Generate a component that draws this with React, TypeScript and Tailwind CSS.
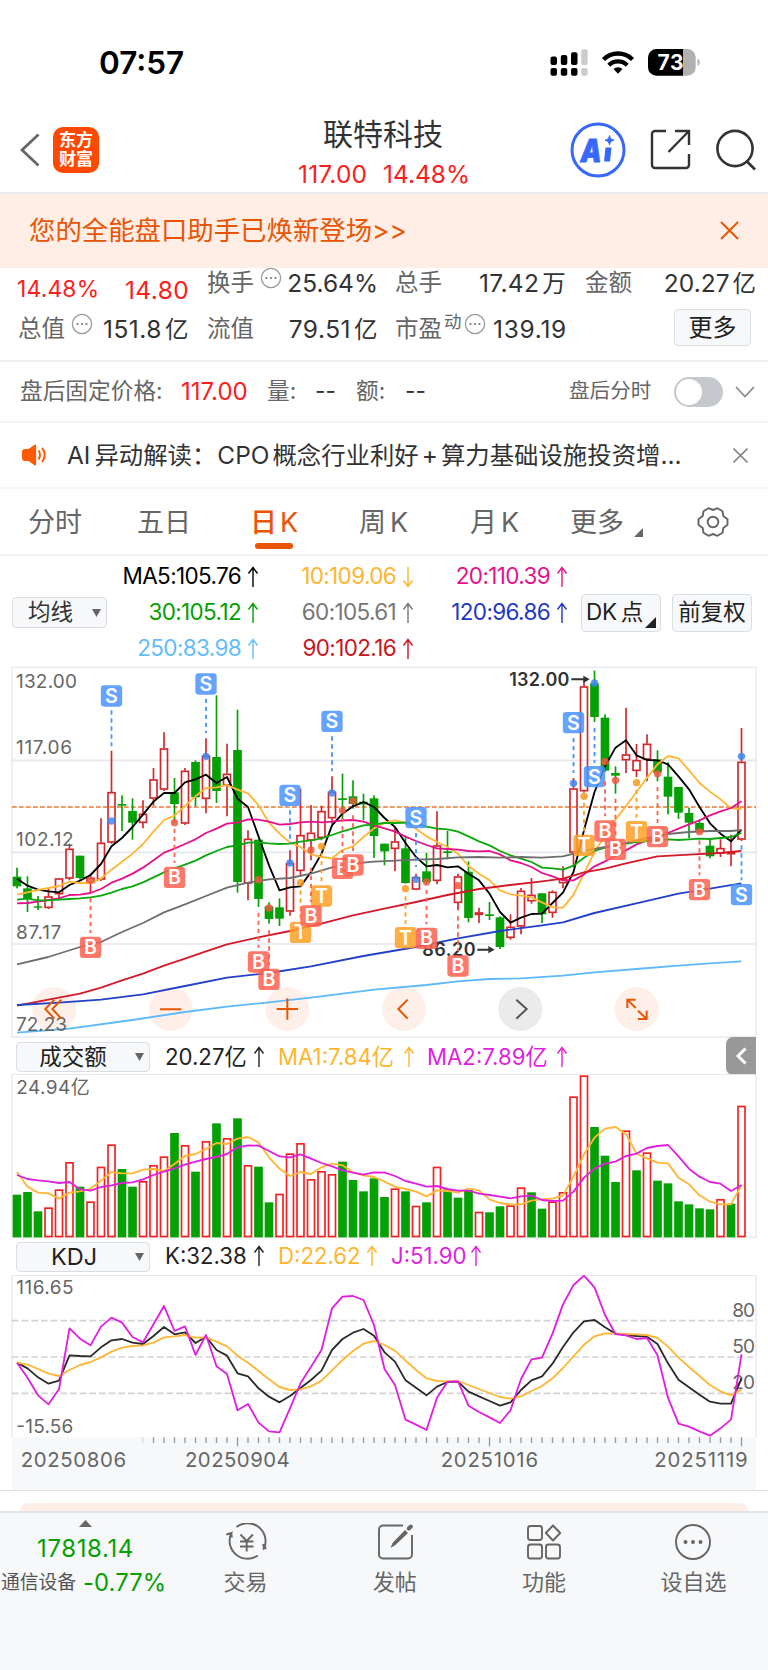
import type { ReactNode } from 'react';

type Candle = ['r' | 'g', number, number, number, number];

// chart drawings use a 3x coordinate space, one candle every 31.5 units
const STEP = 31.5;
const START = 51;
const xAt = (i: number) => START + i * STEP;
const toLine = (ys: number[]) => ys.map((y, i) => `${xAt(i)},${y}`).join(' ');

const GREEN = '#04a004';
const RED = '#d2282d';

// color, high, body top, body bottom, low
const candles: Candle[] = [
    ['g', 622, 649, 678, 684], ['g', 648, 684, 716, 755], ['g', 707, 738, 742, 749], ['r', 683, 708, 743, 746],
    ['r', 654, 654, 702, 716], ['r', 550, 565, 655, 660], ['g', 586, 586, 653, 657], ['r', 640, 652, 668, 697],
    ['r', 474, 547, 658, 662], ['r', 271, 395, 547, 550], ['g', 405, 431, 436, 512], ['g', 414, 452, 487, 538],
    ['r', 420, 460, 488, 504], ['r', 323, 357, 415, 436], ['r', 216, 264, 388, 392], ['g', 353, 396, 431, 487],
    ['r', 323, 331, 490, 494], ['g', 300, 305, 411, 438], ['r', 234, 286, 416, 459], ['g', 105, 290, 392, 428],
    ['r', 250, 340, 376, 468], ['g', 148, 269, 665, 697], ['r', 510, 535, 670, 720], ['g', 538, 538, 716, 740],
    ['g', 726, 738, 776, 790], ['g', 714, 741, 775, 797], ['r', 570, 608, 754, 766], ['r', 385, 524, 632, 645],
    ['r', 434, 517, 541, 600], ['r', 436, 452, 533, 540], ['r', 348, 394, 474, 490], ['g', 340, 414, 419, 480],
    ['g', 360, 408, 431, 445], ['g', 400, 424, 432, 480], ['g', 405, 414, 527, 593], ['g', 550, 550, 573, 615],
    ['r', 500, 543, 566, 633], ['g', 528, 564, 668, 670], ['r', 640, 650, 688, 690], ['g', 578, 633, 665, 670],
    ['r', 453, 555, 662, 672], ['g', 512, 573, 578, 597], ['r', 640, 648, 728, 750], ['g', 603, 634, 773, 786],
    ['r', 742, 756, 764, 788], ['g', 725, 762, 767, 779], ['g', 768, 771, 860, 866], ['r', 762, 799, 833, 838],
    ['r', 683, 691, 799, 822], ['r', 653, 703, 723, 730], ['g', 699, 699, 762, 788], ['r', 690, 694, 758, 772],
    ['r', 618, 654, 669, 684], ['r', 353, 384, 577, 620], ['r', 60, 78, 393, 397], ['g', 31, 69, 170, 185],
    ['g', 162, 172, 331, 335], ['g', 318, 338, 346, 400], ['r', 142, 282, 300, 338], ['r', 251, 299, 332, 351],
    ['r', 222, 250, 298, 363], ['g', 270, 297, 337, 363], ['g', 306, 349, 409, 462], ['g', 380, 380, 457, 476],
    ['g', 442, 458, 487, 534], ['g', 478, 488, 514, 516], ['g', 536, 556, 588, 594], ['r', 537, 563, 580, 590],
    ['r', 523, 575, 582, 618], ['r', 203, 304, 538, 542],
];

const ma5 = [
    655, 676, 688, 693, 696, 674, 661, 644, 611, 558, 533, 500, 463, 424, 398, 398, 366, 357, 343, 368, 350, 415, 440, 528,
    615, 690, 681, 678, 635, 580, 495, 460, 438, 425, 440, 473, 500, 548, 590, 618, 614, 621, 618, 640, 660, 700, 755, 787,
    772, 761, 760, 728, 697, 635, 510, 395, 318, 262, 240, 285, 299, 300, 312, 348, 387, 440, 489, 520, 543, 508,
];
const ma10 = [
    703, 696, 689, 683, 677, 664, 668, 668, 655, 628, 604, 580, 551, 514, 479, 466, 437, 408, 383, 381, 374, 388, 399, 435,
    487, 520, 547, 560, 582, 590, 594, 569, 558, 530, 504, 487, 480, 487, 505, 528, 545, 560, 580, 617, 640, 660, 690, 702,
    706, 711, 726, 741, 742, 703, 640, 575, 526, 477, 437, 395, 352, 312, 287, 294, 330, 368, 394, 417, 444, 446,
];
const ma20 = [
    729, 728, 724, 719, 714, 704, 703, 698, 686, 667, 655, 640, 622, 600, 577, 565, 551, 537, 518, 505, 490, 487, 477, 478,
    484, 493, 491, 486, 484, 486, 484, 480, 479, 484, 495, 504, 514, 529, 542, 554, 564, 566, 568, 572, 573, 572, 582, 600,
    608, 620, 638, 648, 660, 660, 642, 618, 603, 587, 570, 552, 540, 526, 518, 505, 492, 480, 465, 453, 443, 423,
];
const ma30 = [
    718, 715, 720, 720, 718, 716, 714, 711, 706, 697, 686, 678, 666, 651, 636, 624, 613, 601, 585, 572, 560, 555, 547, 546,
    549, 551, 550, 544, 540, 534, 524, 513, 504, 495, 492, 488, 488, 487, 490, 499, 505, 507, 514, 528, 543, 555, 572, 585,
    595, 605, 622, 624, 628, 616, 592, 572, 562, 555, 550, 545, 542, 539, 537, 539, 537, 535, 536, 533, 530, 518,
];
const ma60 = '51,912 145,890 240,860 303,845 366,815 429,788 492,756 555,732 618,707 681,682 744,667 807,657 870,653 933,640 996,621 1059,610 1122,604 1185,601 1248,598 1311,596 1374,591 1437,590 1500,592 1563,590 1626,592 1689,588 1752,572 1815,560 1878,548 1941,533 2004,521 2067,515 2130,512 2193,512 2224,509';
const ma90 = '51,1036 145,1018 240,1000 303,982 366,960 429,940 492,916 555,895 618,873 681,852 775,831 870,812 964,790 1059,765 1153,745 1248,725 1342,704 1437,686 1531,674 1626,663 1689,655 1752,636 1815,625 1878,609 1972,588 2067,583 2161,578 2224,572';
const ma120 = '51,1034 177,1027 303,1018 429,1002 555,977 681,952 807,938 933,918 1090,887 1248,860 1374,834 1500,812 1626,795 1689,786 1783,758 1909,729 2035,700 2130,685 2224,669';
const ma250 = '51,1117 208,1105 397,1079 555,1055 681,1039 807,1026 964,1008 1122,988 1279,974 1374,963 1468,956 1563,954 1689,946 1783,936 1909,926 2035,916 2130,909 2224,903';

// letter, candle index, badge y, dash from, dash to, dot y
const marks: [string, number, number, number, number, number][] = [
    ['S', 9, 107, 150, 258, 482], ['S', 18, 71, 115, 218, 288], ['S', 26, 405, 450, 550, 608], ['S', 30, 183, 228, 333, 398],
    ['S', 38, 472, 518, 620, 657], ['S', 53, 187, 233, 338, 369], ['S', 55, 349, 203, 308, 68], ['S', 69, 703, 555, 660, 288],
    ['T', 27, 816, 690, 775, 667], ['T', 29, 707, 578, 663, 558], ['T', 37, 832, 708, 790, 685], ['T', 54, 555, 428, 515, 408],
    ['T', 59, 514, 388, 472, 367],
    ['B', 7, 861, 713, 818, 660], ['B', 15, 651, 505, 608, 487], ['B', 23, 905, 757, 862, 658], ['B', 24, 957, 810, 915, 743],
    ['B', 28, 767, 622, 725, 569], ['B', 31, 624, 473, 578, 450], ['B', 32, 614, 465, 572, 422], ['B', 39, 834, 688, 792, 665],
    ['B', 42, 917, 768, 872, 676], ['B', 56, 512, 363, 468, 304], ['B', 57, 567, 415, 525, 360], ['B', 61, 529, 380, 488, 340],
    ['B', 65, 688, 540, 645, 514],
];
const markFill: Record<string, string> = { S: '#4a94ff', B: '#ff6250', T: '#ff9f26' };
const dotFill: Record<string, string> = { S: '#3f86f5', B: '#ee5840', T: '#f79a1e' };

const volumeColors = 'gggrrrgrrrggrrrgrgrgrgrgg' + 'rrrrrrgggggrgrgrgggrggrrggrrrrgggrgrggggggrgr';
const volumes = [
    494, 486, 544, 532, 478, 396, 470, 514, 410, 343, 417, 470, 453, 405, 379, 309, 345, 425, 333, 280, 324, 265, 405, 410,
    517, 491, 370, 339, 447, 423, 432, 395, 450, 484, 445, 501, 475, 484, 527, 517, 410, 478, 503, 480, 545, 547, 529, 526,
    472, 487, 536, 514, 486, 199, 136, 291, 377, 456, 301, 421, 367, 452, 460, 514, 523, 535, 538, 507, 521, 227,
];
const volMa1 = [
    426, 470, 488, 490, 506, 488, 484, 476, 452, 426, 430, 430, 419, 417, 423, 402, 378, 372, 357, 339, 342, 326, 321, 337,
    382, 416, 438, 426, 432, 412, 401, 406, 427, 436, 441, 455, 470, 477, 485, 499, 481, 483, 487, 476, 481, 508, 519, 523,
    523, 512, 508, 506, 497, 440, 373, 323, 296, 291, 312, 371, 385, 398, 400, 443, 463, 496, 515, 523, 523, 466,
];
const volMa2 = [
    435, 447, 451, 454, 459, 456, 478, 482, 471, 466, 459, 457, 448, 435, 425, 415, 404, 395, 387, 381, 372, 352, 346, 347,
    363, 379, 382, 373, 386, 399, 409, 421, 428, 434, 427, 428, 438, 453, 461, 470, 468, 477, 482, 482, 491, 495, 500, 505,
    499, 497, 510, 513, 512, 485, 443, 416, 401, 395, 378, 371, 354, 348, 345, 379, 416, 440, 456, 461, 483, 465,
];

const kLine = [
    383, 400, 427, 446, 437, 361, 363, 364, 337, 316, 312, 323, 327, 303, 276, 298, 292, 324, 305, 345, 362, 415, 424, 460,
    485, 502, 483, 459, 435, 407, 345, 312, 293, 282, 302, 352, 380, 436, 458, 481, 455, 441, 440, 470, 484, 498, 512, 502,
    465, 436, 424, 386, 336, 292, 259, 255, 277, 296, 300, 303, 305, 327, 385, 434, 457, 479, 500, 506, 506, 430,
];
const dLine = [
    383, 389, 402, 416, 423, 405, 390, 381, 367, 350, 338, 333, 331, 323, 307, 304, 300, 308, 307, 320, 334, 362, 383, 408,
    433, 456, 465, 463, 454, 437, 406, 375, 348, 326, 318, 330, 347, 377, 405, 430, 438, 439, 438, 450, 462, 474, 486, 491,
    484, 468, 453, 430, 399, 364, 329, 304, 295, 296, 297, 298, 300, 309, 335, 368, 396, 423, 450, 469, 481, 463,
];
const jLine = [
    383, 428, 481, 508, 463, 280, 311, 331, 275, 248, 263, 306, 322, 268, 213, 288, 274, 360, 300, 394, 417, 526, 507, 563,
    589, 592, 520, 445, 395, 345, 220, 185, 183, 195, 270, 402, 450, 554, 569, 585, 488, 440, 439, 512, 531, 547, 564, 526,
    432, 373, 368, 296, 208, 150, 122, 157, 240, 297, 301, 312, 309, 361, 488, 566, 575, 589, 602, 580, 554, 358,
];

const Arrow = ({ down = false }: { down?: boolean }) => (
    <svg width="12" height="22" viewBox="0 0 12 22" fill="none" stroke="currentColor" strokeWidth="1.4" className={down ? 'rotate-180' : ''}>
        <path d="M6 21V2M1.5 7.5 6 1.5l4.500 6" />
    </svg>
);

const Dots = () => (
    <svg width="22" height="22" viewBox="0 0 22 22" className="relative -top-[5px] shrink-0">
        <circle cx="11" cy="11" r="9.600" fill="none" stroke="#999" strokeWidth="1.300" />
        <circle cx="6.500" cy="11" r="1.100" fill="#777" />
        <circle cx="11" cy="11" r="1.100" fill="#777" />
        <circle cx="15.500" cy="11" r="1.100" fill="#777" />
    </svg>
);

const StatusBar = () => (
    <div className="flex h-[111px] items-start">
        <div className="ml-[99px] mt-[46px] w-[451px] text-[31.5px] font-semibold leading-[34px] text-black">07:57</div>
        <svg width="152" height="30" viewBox="550 48 152 30" className="mt-[48px]">
            <g fill="#000">
                <rect x="550.5" y="56.500" width="6.500" height="8.500" rx="2" />
                <rect x="560.8" y="55" width="6.500" height="10" rx="2" />
                <rect x="571" y="52.300" width="6.500" height="12.700" rx="2" />
                <rect x="550.5" y="68" width="6.500" height="7.700" rx="2" />
                <rect x="560.8" y="68" width="6.500" height="7.700" rx="2" />
                <rect x="571" y="68" width="6.500" height="7.700" rx="2" />
            </g>
            <rect x="581.200" y="49.300" width="6.500" height="15.700" rx="2" fill="#ccc" />
            <rect x="581.200" y="68" width="6.500" height="7.700" rx="2" fill="#ccc" />
            <g fill="none" stroke="#000" strokeWidth="4.300">
                <path d="M603.500 59.500a20.500 20.500 0 0 1 29 0" />
                <path d="M608.800 65.200a13 13 0 0 1 18.400 0" />
            </g>
            <path d="M618 73.800l-4.500-4.700a6.400 6.400 0 0 1 9 0z" fill="#000" />
            <path d="M656.500 49H683v26.700h-26.500a8.500 8.500 0 0 1-8.500-8.500v-9.700a8.500 8.500 0 0 1 8.500-8.500z" fill="#000" />
            <path d="M683 49h4.200a8.500 8.500 0 0 1 8.500 8.500v9.700a8.500 8.500 0 0 1-8.500 8.500H683z" fill="#b0b0b0" />
            <path d="M697.500 58.800c3 1 3 6 0 7z" fill="#b0b0b0" />
            <text x="657.5" y="70" fontSize="21" fontWeight="700" fill="#fff" textLength="26">73</text>
        </svg>
    </div>
);

const Header = () => (
    <div className="flex h-[81px] items-center">
        <svg width="20" height="34" viewBox="0 0 20 34" fill="none" stroke="#666" strokeWidth="2.800" className="ml-5 mt-[-3px] shrink-0">
            <path d="M18.500 1.500 2 17l16.500 15.500" />
        </svg>
        <div className="ml-[13px] mt-[-4px] flex h-[46px] w-[46px] shrink-0 flex-col items-center justify-center rounded-[10px] bg-[#ff4800] text-[17px] font-semibold leading-[19px] text-white">
            <span>东方</span>
            <span>财富</span>
        </div>
        <div className="ml-[158px] flex w-[252px] shrink-0 flex-col items-center">
            <div className="mt-[5px] text-[30px] leading-[40px] text-[#333]">联特科技</div>
            <div className="flex w-full text-[24.500px] leading-[40px] text-[#fa2020]">
                <span className="ml-[41px] w-[85px] tracking-[0.2px]">117.00</span>
                <span>14.48%</span>
            </div>
        </div>
        <svg width="56" height="58" viewBox="0 0 56 58" className="ml-[61px] mt-[-4px] shrink-0">
            <circle cx="28" cy="29" r="26" fill="none" stroke="#3568fb" strokeWidth="3" />
            <text x="10.500" y="40.500" fontSize="31" fontWeight="900" fontStyle="italic" fill="#3568fb" stroke="#3568fb" strokeWidth=".8" textLength="21" lengthAdjust="spacingAndGlyphs">A</text>
            <path d="M35.500 26.500h6l-1.500 14h-6z" fill="#3568fb" />
            <path d="M39.500 14.500c.6 3 1.500 4 4.500 4.700-3 .7-3.900 1.700-4.500 4.700-.6-3-1.500-4-4.500-4.700 3-.7 3.900-1.700 4.500-4.700z" fill="#3568fb" stroke="#3568fb" />
        </svg>
        <svg width="41" height="41" viewBox="0 0 41 41" fill="none" stroke="#333" strokeWidth="2.400" className="ml-[24px] mt-[-4px] shrink-0">
            <path d="M16 2H5a3 3 0 0 0-3 3v31a3 3 0 0 0 3 3h31a3 3 0 0 0 3-3V25M25 2h14v14M39 2 18.500 23" />
        </svg>
        <svg width="42" height="42" viewBox="0 0 42 42" fill="none" stroke="#333" strokeWidth="2.600" className="ml-[24px] mt-[-4px] shrink-0">
            <circle cx="20" cy="19.500" r="17.600" />
            <path d="m32 32.500 8 8" />
        </svg>
    </div>
);

const Banner = () => (
    <div className="flex h-[76px] items-center border-t-2 border-[#e9ebee] bg-[#feeee6] text-[#ea5504]">
        <span className="-mt-[2px] ml-[29px] w-[691px] text-[26.4px]">您的全能盘口助手已焕新登场&gt;&gt;</span>
        <svg width="19" height="19" viewBox="0 0 19 19" stroke="currentColor" strokeWidth="1.900" className="-mt-[2px]">
            <path d="m1 1 17 17M18 1 1 18" />
        </svg>
    </div>
);

const Num = ({ value, unit, w }: { value: string; unit?: string; w: string }) => (
    <span className={`shrink-0 whitespace-nowrap text-right text-[24.5px] text-[#333] ${w}`}>
        {value}
        {unit && <span className="ml-[3px] text-[23.500px]">{unit}</span>}
    </span>
);

const Quotes = () => (
    <div className="h-[94px] border-b-2 border-[#eceef0] text-[23.5px] leading-[30px] text-[#666]">
        <div className="flex h-[30px] items-center">
            <span className="ml-[17px] mt-[12px] w-[108px] text-[22.800px] tracking-[0.2px] text-[#fa2020]">14.48%</span>
            <span className="mt-[14px] w-[82px] text-[24.5px] tracking-[0.4px] text-[#fa2020]">14.80</span>
            <span className="w-[53px]">换手</span>
            <Dots />
            <Num value="25.64%" w="w-[96px]" />
            <span className="ml-[17px] w-[60px]">总手</span>
            <Num value="17.42" unit="万" w="w-[111px] tracking-[0.3px]" />
            <span className="ml-[19px] w-[59px]">金额</span>
            <Num value="20.27" unit="亿" w="w-[112px]" />
        </div>
        <div className="mt-[11px] flex h-[40px] items-center">
            <span className="ml-[18px] w-[53px]">总值</span>
            <Dots />
            <Num value="151.8" unit="亿" w="w-[96px] tracking-[0.5px]" />
            <span className="ml-[18px] w-[60px]">流值</span>
            <Num value="79.51" unit="亿" w="w-[111px] tracking-[0.5px]" />
            <span className="ml-[17px] w-[49px]">市盈</span>
            <span className="relative -top-[7px] w-[20px] text-[17.500px]">动</span>
            <Dots />
            <Num value="139.19" w="w-[81px] tracking-[0.7px]" />
            <button className="ml-[107px] h-[37px] w-[77px] rounded border border-[#dadee4] bg-[#f7f8fa] text-[24px] leading-[34px] text-[#222] -mt-[3px]">更多</button>
        </div>
    </div>
);

const AfterHours = () => (
    <div className="flex h-[61px] items-center border-b-2 border-[#f4f4f5] text-[22.700px] text-[#666]">
        <span className="ml-[20px] w-[161px]">盘后固定价格:</span>
        <span className="w-[86px] text-[24px] text-[#fa2020]">117.00</span>
        <span className="w-[48px]">量:</span>
        <span className="w-[41px] text-[#333]">--</span>
        <span className="w-[49px]">额:</span>
        <span className="w-[164px] text-[#333]">--</span>
        <span className="w-[105px] text-[20.600px]">盘后分时</span>
        <div className="flex h-[30px] w-[49px] items-center rounded-full bg-[#c5c8cd] px-[2px]">
            <div className="h-[26px] w-[26px] rounded-full bg-white" />
        </div>
        <svg width="20" height="12" viewBox="0 0 20 12" fill="none" stroke="#888" strokeWidth="1.700" className="ml-[12px]">
            <path d="m1 1 9 9.500L19 1" />
        </svg>
    </div>
);

const AiNews = () => (
    <div className="flex h-[66px] items-center border-b-2 border-[#f6f6f7] text-[24.4px] text-[#333]">
        <svg width="26" height="22" viewBox="0 0 26 22" className="ml-[21px] shrink-0">
            <path d="M4 5h3.500L13.500.8c.8-.5 1.600-.1 1.600.8v18.800c0 .9-.8 1.300-1.600.8L7.500 17H4a3 3 0 0 1-3-3V8a3 3 0 0 1 3-3z" fill="#ff5a00" />
            <path d="M17.500 6.500c2 2.500 2 6.500 0 9M21 4c3.600 4 3.600 10 0 14" fill="none" stroke="#ff5a00" strokeWidth="2" />
        </svg>
        <span className="ml-[20px] w-[666px] whitespace-nowrap">
            AI<span className="ml-1">异动解读：</span>
            <span className="ml-[1px]">CPO</span>
            <span className="ml-[3px]">概念行业利好</span>
            <span className="mx-[3px]">+</span>
            <span>算力基础设施投资增...</span>
        </span>
        <svg width="15" height="15" viewBox="0 0 15 15" stroke="#888" strokeWidth="1.600" className="shrink-0">
            <path d="m.5.5 14 14M14.500.5l-14 14" />
        </svg>
    </div>
);

const Tabs = () => (
    <div className="flex h-[67px] items-center border-b-2 border-[#f4f4f5] pt-[2px] text-[27px] text-[#666]">
        <span className="ml-[28px] w-[109px]">分时</span>
        <span className="w-[113px]">五日</span>
        <span className="relative w-[109px] font-medium text-[#ea5504]">
            日<span className="ml-[3px] font-normal">K</span>
            <i className="absolute -bottom-[13px] left-[5px] h-[6px] w-[38px] rounded-[3px] bg-[#ea5504]" />
        </span>
        <span className="w-[111px]">周<span className="ml-[4px]">K</span></span>
        <span className="w-[100px]">月<span className="ml-[4px]">K</span></span>
        <span className="w-[64px]">更多</span>
        <svg width="9" height="9" viewBox="0 0 9 9" className="mt-[19px]">
            <path d="M9 0v9H0z" fill="#666" />
        </svg>
        <svg width="32" height="32" viewBox="0 0 32 32" fill="none" stroke="#666" strokeWidth="1.900" className="-mt-[2px] ml-[54px]">
            <path d="M11.500 2.200 16 4l4.500-1.800 5 3 .8 4.800 4.200 3.300v5.400L26.300 22l-.8 4.800-5 3L16 28l-4.500 1.800-5-3-.8-4.800-4.200-3.300v-5.400L5.700 10l.8-4.800z" strokeLinejoin="round" />
            <circle cx="16" cy="16" r="5.300" />
        </svg>
    </div>
);

const Ma = ({ color, value, w, down }: { color: string; value: string; w: string; down?: boolean }) => (
    <span className={`flex items-center justify-end gap-[6px] tracking-[-0.65px] ${color} ${w}`}>
        {value}
        <Arrow down={down} />
    </span>
);

const Averages = () => (
    <div className="flex h-[110px] items-center pt-[3px] text-[22.500px]">
        <div className="ml-[12px] flex h-[31px] w-[95px] items-center justify-between rounded border border-[#dadee4] bg-[#f7f8fa] pl-[15px] pr-[5px] text-[#333]">
            均线
            <svg width="9" height="8" viewBox="0 0 9 8"><path d="M0 0h9L4.500 8z" fill="#666" /></svg>
        </div>
        <div className="w-[462px]">
            <div className="flex h-[36px]">
                <Ma color="text-black" value="MA5:105.76" w="w-[152px]" />
                <Ma color="text-[#ffb52e]" value="10:109.06" w="w-[155px]" down />
                <Ma color="text-[#e5128c]" value="20:110.39" w="w-[154px]" />
            </div>
            <div className="flex h-[36px]">
                <Ma color="text-[#04a004]" value="30:105.12" w="w-[152px]" />
                <Ma color="text-[#777]" value="60:105.61" w="w-[155px]" />
                <Ma color="text-[#1f38c4]" value="120:96.86" w="w-[154px]" />
            </div>
            <div className="flex h-[36px]">
                <Ma color="text-[#63bdfb]" value="250:83.98" w="w-[152px]" />
                <Ma color="text-[#cc1420]" value="90:102.16" w="w-[155px]" />
            </div>
        </div>
        <div className="ml-[12px] flex h-[38px] w-[80px] items-center justify-between rounded border border-[#dadee4] bg-[#f7f8fa] pl-[4px] pr-[4px] text-[#222]">
            <span className="w-[57px] whitespace-nowrap tracking-[-0.3px]">DK<span className="ml-[4px]">点</span></span>
            <svg width="11" height="11" viewBox="0 0 11 11" className="mt-[19px] shrink-0"><path d="M11 0v11H0z" fill="#222" /></svg>
        </div>
        <div className="ml-[11px] flex h-[38px] w-[80px] items-center justify-center rounded border border-[#dadee4] bg-[#f7f8fa] text-[#222]">前复权</div>
    </div>
);

const AxisText = ({ x, y, w, children }: { x: number; y: number; w: number; children: string }) => (
    <text x={x} y={y} fontSize="57" fill="#666" textLength={w}>{children}</text>
);

const KChart = () => (
    <svg width="768" height="374" viewBox="0 17 2304 1122" className="block">
        <g fill="none" stroke="#e6e8ef" strokeWidth="4">
            <rect x="36" y="21" width="2232" height="1109" />
            <path d="M36 300h2232M36 576h2232M36 851h2232" strokeWidth="5" />
        </g>
        <path d="M36 440h2232" stroke="#f0742f" strokeWidth="5" strokeDasharray="14 7" />
        {[[163, 0], [512, 0], [862, 0], [1212, 0], [1561, 1], [1910, 0]].map(([cx, off]) => (
            <circle key={cx} cx={cx} cy="1046" r="66" fill={off ? '#ebebeb' : '#fef0e9'} />
        ))}
        {candles.map(([c, high, top, bottom, low], i) => {
            const x = xAt(i);
            if (c === 'g') {
                return (
                    <g key={i} fill={GREEN}>
                        <rect x={x - 2.5} y={high} width="5" height={low - high} />
                        <rect x={x - 13} y={top} width="26" height={bottom - top} />
                    </g>
                );
            }
            return (
                <g key={i} fill="none" stroke={RED} strokeWidth="5">
                    <path d={`M${x} ${high}V${top}M${x} ${bottom}V${low}`} />
                    <rect x={x - 10.5} y={top + 2} width="21" height={Math.max(bottom - top - 4, 3)} />
                </g>
            );
        })}
        <g fill="none" strokeWidth="5.500" strokeLinejoin="round">
            <polyline points={toLine(ma5)} stroke="#000" />
            <polyline points={toLine(ma10)} stroke="#ffb735" />
            <polyline points={toLine(ma20)} stroke="#e5128c" />
            <polyline points={toLine(ma30)} stroke="#0ca70c" />
            <polyline points={ma60} stroke="#6e6e6e" />
            <polyline points={ma90} stroke="#d3192a" />
            <polyline points={ma120} stroke="#2340c8" />
            <polyline points={ma250} stroke="#5db9fa" />
        </g>
        <AxisText x={48} y={84} w={183}>132.00</AxisText>
        <AxisText x={48} y={281} w={168}>117.06</AxisText>
        <AxisText x={48} y={557} w={173}>102.12</AxisText>
        <AxisText x={48} y={835} w={136}>87.17</AxisText>
        <AxisText x={48} y={1111} w={153}>72.23</AxisText>
        <g fill="#333" fontSize="54" fontWeight="600">
            <text x="1528" y="76" textLength="180">132.00</text>
            <text x="1267" y="888" textLength="160">86.20</text>
            <path d="M1714 54h36v-8l19 11-19 11v-8h-36zM1432 865h33v-8l19 11-19 11v-8h-33z" />
        </g>
        {marks.map(([letter, i, y, from, to, dot]) => (
            <g key={letter + i}>
                <path d={`M${xAt(i)} ${from}V${to}`} stroke={markFill[letter]} strokeWidth="5.500" strokeDasharray="13 11" />
                <circle cx={xAt(i)} cy={dot} r="11" fill={dotFill[letter]} fillOpacity=".85" />
                <rect x={xAt(i) - 32} y={y - 32} width="64" height="64" rx="10" fill={markFill[letter]} fillOpacity=".86" />
                <text x={xAt(i)} y={y + 21} textAnchor="middle" fontSize="59" fontWeight="600" fill="#fff">{letter}</text>
            </g>
        ))}
        <g fill="none" stroke="#ea5504" strokeWidth="6">
            <path d="M163 1018l-27 28 27 29M184 1018l-27 28 27 29" />
            <path d="M480 1047h64M830 1046h64M862 1014v64M1223 1018l-28 28 28 29" />
            <path d="M1907 1018h-25v25M1882 1018l25 25M1914 1076h26v-25M1940 1076l-26-25" />
            <path d="M1549 1018l31 28-31 29" stroke="#555" />
        </g>
    </svg>
);

const Picker = ({ children }: { children: ReactNode }) => (
    <div className="ml-[16px] flex h-[30px] w-[134px] shrink-0 items-center rounded border border-[#dadee4] bg-[#f7f8fa] text-[22.500px] text-[#222]">
        <span className="w-[105px] pl-[7px] text-center">{children}</span>
        <svg width="9" height="8" viewBox="0 0 9 8" className="ml-[13px]"><path d="M0 0h9L4.500 8z" fill="#666" /></svg>
    </div>
);

const Indicator = ({ color, value, w }: { color: string; value: string; w: string }) => (
    <span className={`flex items-center justify-between whitespace-nowrap ${color} ${w}`}>
        {value}
        <Arrow />
    </span>
);

const VolumeHead = () => (
    <div className="flex h-[34px] items-center text-[22.200px]">
        <Picker>成交额</Picker>
        <Indicator color="ml-[15px] text-[#222]" value="20.27亿" w="w-[100px]" />
        <Indicator color="ml-[13px] text-[#ffb52e]" value="MA1:7.84亿" w="w-[137px]" />
        <Indicator color="ml-[12px] text-[#e01fe0]" value="MA2:7.89亿" w="w-[141px]" />
        <div className="-mt-[2px] ml-[158px] flex h-[38px] w-[30px] shrink-0 items-center justify-center rounded-l-[7px] bg-[#999]">
            <svg width="11" height="18" viewBox="0 0 11 18" fill="none" stroke="#fff" strokeWidth="3"><path d="M9.500 1.500 2 9l7.500 7.500" /></svg>
        </div>
    </div>
);

const VolumeChart = () => (
    <svg width="768" height="164" viewBox="0 132 2304 492" className="block">
        <rect x="36" y="133" width="2232" height="489" fill="none" stroke="#e6e8ea" strokeWidth="4" />
        {volumes.map((y, i) =>
            volumeColors[i] === 'g' ? (
                <rect key={i} x={xAt(i) - 13} y={y} width="26" height={622 - y} fill={GREEN} />
            ) : (
                <rect key={i} x={xAt(i) - 10.5} y={y + 2.5} width="21" height={617 - y} fill="#fff" stroke="#f52020" strokeWidth="5" />
            )
        )}
        <g fill="none" strokeWidth="5.500" strokeLinejoin="round">
            <polyline points={toLine(volMa1)} stroke="#ffb735" />
            <polyline points={toLine(volMa2)} stroke="#e01fe0" />
        </g>
        <AxisText x={49} y={191} w={220}>24.94亿</AxisText>
    </svg>
);

const KdjHead = () => (
    <div className="flex h-[37px] items-center text-[22.200px]">
        <Picker>
            <span className="pl-[2px] text-[23.500px]">KDJ</span>
        </Picker>
        <Indicator color="ml-[15px] text-[#222]" value="K:32.38" w="w-[100px]" />
        <Indicator color="ml-[13px] text-[#ffb52e]" value="D:22.62" w="w-[100px]" />
        <Indicator color="ml-[13px] text-[#e01fe0]" value="J:51.90" w="w-[91px]" />
    </div>
);

const KdjChart = () => (
    <svg width="768" height="215" viewBox="0 120 2304 645" className="block">
        <rect x="36" y="606" width="2232" height="160" fill="#f7f8fa" />
        <path d="M36 606V121h2232v485" fill="none" stroke="#e6e8ea" strokeWidth="4" />
        <path d="M36 257h2232M36 366h2232M36 475h2232" stroke="#d3d3d3" strokeWidth="5" strokeDasharray="20 9" />
        <AxisText x={49} y={177} w={172}>116.65</AxisText>
        <AxisText x={49} y={595} w={171}>-15.56</AxisText>
        <AxisText x={2197} y={246} w={68}>80</AxisText>
        <AxisText x={2197} y={354} w={68}>50</AxisText>
        <AxisText x={2197} y={463} w={68}>20</AxisText>
        <g fill="none" strokeWidth="5.500" strokeLinejoin="round">
            <polyline points={toLine(kLine)} stroke="#2b2b2b" />
            <polyline points={toLine(dLine)} stroke="#ffb735" />
            <polyline points={toLine(jLine)} stroke="#e01fe0" />
        </g>
        {candles.map((_, i) =>
            i < 12 ? null : (
                <path key={i} d={`M${xAt(i)} 607v${i === 21 || i === 45 || i === 69 ? 27 : 17}`} stroke={i === 12 ? '#ddd' : '#999'} strokeWidth="4" />
            )
        )}
        <g fontSize="61" fill="#666">
            <text x="62" y="697" textLength="316">20250806</text>
            <text x="555" y="697" textLength="314">20250904</text>
            <text x="1322" y="697" textLength="292">20251016</text>
            <text x="1963" y="697" textLength="280">20251119</text>
        </g>
    </svg>
);

const NavItem = ({ label, children }: { label: string; children: ReactNode }) => (
    <div className="flex w-[149.300px] flex-col items-center text-[22px] text-[#666]">
        <svg width="42" height="38" viewBox="0 0 42 38" fill="none" stroke="#666" strokeWidth="1.900" className="mt-[10px]">
            {children}
        </svg>
        <span className="mt-[6px] leading-[30px]">{label}</span>
    </div>
);

const BottomNav = () => (
    <div className="flex h-[159px] border-t-2 border-[#e2e4e7] bg-[#f7f8fa]">
        <div className="flex w-[171px] flex-col items-center">
            <svg width="13" height="7" viewBox="0 0 13 7" className="mt-[7px]"><path d="M6.500 0 13 7H0z" fill="#666" /></svg>
            <span className="mt-[7px] text-[24px] leading-[30px] tracking-[0.6px] text-[#04a004]">17818.14</span>
            <div className="mt-[4px] flex w-full items-center leading-[30px]">
                <span className="ml-[1px] w-[82px] text-[18.800px] text-[#555]">通信设备</span>
                <span className="text-[23.800px] tracking-[0.1px] text-[#04a004]">-0.77%</span>
            </div>
        </div>
        <NavItem label="交易">
            <path d="M11.500 4A18 18 0 0 1 39 25.500l2.500-1M32.800 32.500A18 18 0 0 1 6.300 10l-5 1.500M6.300 10l.5 4.500M39 25.500l-.8-4.500" />
            <path d="m15.500 11.500 6.200 6.500 6.200-6.500M21.700 18v10.500M15 18.500h13.500M15 23.500h13.500" />
        </NavItem>
        <NavItem label="发帖">
            <path d="M29 2.500H9a4 4 0 0 0-4 4v25a4 4 0 0 0 4 4h25a4 4 0 0 0 4-4V12" />
            <path d="m16.500 25 2-5L31 7l3 3-12.500 12z" fill="#666" stroke="none" />
            <path d="m34.800 5.500 2-2" strokeWidth="4" strokeLinecap="round" />
        </NavItem>
        <NavItem label="功能">
            <rect x="5" y="3" width="14" height="14" rx="2.500" />
            <rect x="5" y="21.500" width="14" height="14" rx="2.500" />
            <rect x="23" y="21.500" width="14" height="14" rx="2.500" />
            <path d="M30 2.500 37.200 10 30 17.500 22.800 10z" strokeLinejoin="round" />
        </NavItem>
        <NavItem label="设自选">
            <circle cx="21" cy="19" r="17" />
            <g fill="#666" stroke="none">
                <circle cx="13.500" cy="19" r="2" />
                <circle cx="21" cy="19" r="2" />
                <circle cx="28.500" cy="19" r="2" />
            </g>
        </NavItem>
    </div>
);

export default function App() {
    return (
        <div className="h-[1670px] w-[768px] overflow-hidden bg-white font-['Inter','Noto_Sans_CJK_SC',sans-serif] leading-none">
            <StatusBar />
            <Header />
            <Banner />
            <Quotes />
            <AfterHours />
            <AiNews />
            <Tabs />
            <Averages />
            <KChart />
            <VolumeHead />
            <VolumeChart />
            <KdjHead />
            <KdjChart />
            <div className="flex h-[21px] items-end justify-center overflow-hidden border-t border-[#dcdee1]">
                <div className="h-[8px] w-[728px] rounded-t-[24px] bg-[#feeee6]" />
            </div>
            <BottomNav />
        </div>
    );
}
